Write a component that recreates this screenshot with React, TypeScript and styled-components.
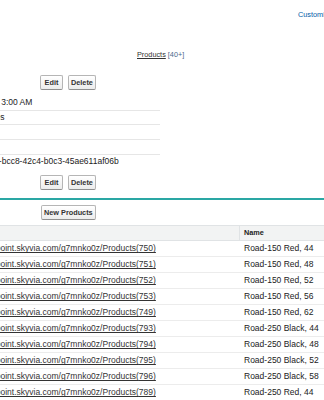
import React from "react";
import styled, { createGlobalStyle } from "styled-components";

const GlobalStyle = createGlobalStyle`
  html, body {
    margin: 0;
    padding: 0;
    background: #ffffff;
    overflow: hidden;
  }
  body {
    font-family: "Liberation Sans", Arial, sans-serif;
    color: #222222;
  }
`;

interface DetailRow {
  label: string;
  value: string;
}

interface ProductRow {
  id: number;
  name: string;
}

const detailRows: DetailRow[] = [
  { label: "Last Modified Date", value: "12/4/2017 3:00 AM" },
  { label: "Category", value: "Road Bikes" },
  { label: "Description", value: "" },
  { label: "Notes", value: "" },
  { label: "External Id", value: "8e2b6d1e-bcc8-42c4-b0c3-45ae611af06b" },
];

const products: ProductRow[] = [
  { id: 750, name: "Road-150 Red, 44" },
  { id: 751, name: "Road-150 Red, 48" },
  { id: 752, name: "Road-150 Red, 52" },
  { id: 753, name: "Road-150 Red, 56" },
  { id: 749, name: "Road-150 Red, 62" },
  { id: 793, name: "Road-250 Black, 44" },
  { id: 794, name: "Road-250 Black, 48" },
  { id: 795, name: "Road-250 Black, 52" },
  { id: 796, name: "Road-250 Black, 58" },
  { id: 789, name: "Road-250 Red, 44" },
];

const BASE_URL = "https://endpoint.skyvia.com/g7mnko0z/Products";

export default function App() {
  return (
    <>
      <GlobalStyle />
      <Viewport>
        <Sheet>
          <TopBar>
            <TopLink>Customize Page</TopLink>
            <Sep>|</Sep>
            <TopLink>Edit Layout</TopLink>
          </TopBar>

          <RelatedLinks>
            <HoverLink>Products</HoverLink>
            <Count>[40+]</Count>
          </RelatedLinks>

          <ButtonRow $top={15}>
            <Button>Edit</Button>
            <Button>Delete</Button>
          </ButtonRow>

          <DetailList>
            {detailRows.map((row, i) => (
              <DetailLine key={row.label}>
                <LabelCell>{row.label}</LabelCell>
                <ValueCell $last={i === detailRows.length - 1}>{row.value}</ValueCell>
              </DetailLine>
            ))}
          </DetailList>

          <ButtonRow $top={6}>
            <Button>Edit</Button>
            <Button>Delete</Button>
          </ButtonRow>

          <RelatedList>
            <ListHeader>
              <Button>New Products</Button>
            </ListHeader>
            <Table>
              <HeaderRow>
                <HeadCell>Action</HeadCell>
                <HeadCell>Products</HeadCell>
                <HeadCell $divider>Name</HeadCell>
              </HeaderRow>
              {products.map((p) => (
                <DataRow key={p.id}>
                  <Cell>Edit | Del</Cell>
                  <Cell>
                    <RowLink>
                      {BASE_URL}({p.id})
                    </RowLink>
                  </Cell>
                  <NameCell>{p.name}</NameCell>
                </DataRow>
              ))}
            </Table>
          </RelatedList>
        </Sheet>
      </Viewport>
    </>
  );
}

const Viewport = styled.div`
  width: 324px;
  height: 400px;
  overflow: hidden;
`;

/* page is scrolled sideways: the sheet starts 200px left of the window */
const Sheet = styled.div`
  width: 800px;
  margin-left: -200px;
`;

const TopBar = styled.div`
  display: flex;
  align-items: flex-start;
  gap: 4px;
  height: 40px;
  padding-left: 498px;
  padding-top: 10px;
  box-sizing: border-box;
  font-size: 7.3px;
  line-height: 10px;
`;

const TopLink = styled.span`
  color: #015ba7;
`;

const Sep = styled.span`
  color: #999999;
`;

const RelatedLinks = styled.div`
  display: flex;
  gap: 2px;
  padding-left: 337px;
  margin-top: 10px;
  font-size: 7.3px;
  line-height: 10px;
`;

const HoverLink = styled.span`
  color: #333333;
  text-decoration: underline;
`;

const Count = styled.span`
  color: #4a6a8c;
`;

const ButtonRow = styled.div<{ $top: number }>`
  display: flex;
  gap: 5px;
  padding-left: 240px;
  margin-top: ${(p) => p.$top}px;
`;

const Button = styled.button`
  font-family: "Liberation Sans", Arial, sans-serif;
  font-size: 7.3px;
  font-weight: bold;
  color: #333333;
  height: 15px;
  min-width: 23px;
  padding: 0 2px;
  border: 1px solid #b5b5b5;
  border-bottom-color: #8f8f8f;
  border-radius: 2px;
  background: linear-gradient(#ffffff, #ececec);
  line-height: 13px;
  text-align: center;
`;

const DetailList = styled.div`
  display: flex;
  flex-direction: column;
  margin-top: 6px;
`;

const DetailLine = styled.div`
  display: grid;
  grid-template-columns: 161px 199px;
  height: 14.7px;
`;

const LabelCell = styled.div`
  font-size: 8.5px;
  font-weight: bold;
  color: #4a4a56;
  text-align: right;
  padding-right: 10px;
`;

const ValueCell = styled.div<{ $last: boolean }>`
  font-size: 8.5px;
  line-height: 13.7px;
  color: #222222;
  white-space: nowrap;
  border-bottom: 1px solid ${(p) => (p.$last ? "transparent" : "#e6e6e6")};
`;

const RelatedList = styled.div`
  margin-top: 8px;
  border-top: 2px solid #2aa7a4;
`;

const ListHeader = styled.div`
  display: flex;
  padding-left: 241px;
  padding-top: 5px;
  height: 25px;
  box-sizing: border-box;
`;

const Table = styled.div`
  display: flex;
  flex-direction: column;
`;

const rowGrid = `
  display: grid;
  grid-template-columns: 150px 289px 1fr;
`;

const HeaderRow = styled.div`
  ${rowGrid}
  height: 16px;
  box-sizing: border-box;
  background: #f2f3f3;
  border-top: 1px solid #e0e3e5;
  border-bottom: 1px solid #e0e3e5;
`;

const HeadCell = styled.div<{ $divider?: boolean }>`
  font-size: 7.3px;
  font-weight: bold;
  line-height: 14px;
  padding-left: 4px;
  border-left: ${(p) => (p.$divider ? "1px solid #e0e3e5" : "none")};
  color: ${(p) => (p.$divider ? "#222222" : "transparent")};
`;

const DataRow = styled.div`
  ${rowGrid}
  height: 16px;
  box-sizing: border-box;
  border-bottom: 1px solid #ececec;
`;

const Cell = styled.div`
  font-size: 8.5px;
  line-height: 15px;
  padding-left: 6px;
  white-space: nowrap;
  color: #222222;
`;

const NameCell = styled(Cell)`
  padding-left: 5px;
`;

const RowLink = styled.span`
  color: #333333;
  text-decoration: underline;
`;
